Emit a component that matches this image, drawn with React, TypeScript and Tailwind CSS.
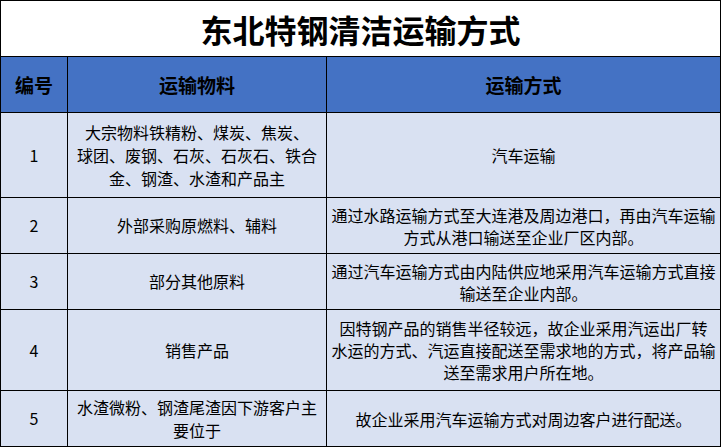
import React from "react";

interface Row {
  no: string;
  material: string[];
  method: string[];
  height: string;
}

const rows: Row[] = [
  {
    no: "1",
    material: ["大宗物料铁精粉、煤炭、焦炭、", "球团、废钢、石灰、石灰石、铁合", "金、钢渣、水渣和产品主"],
    method: ["汽车运输"],
    height: "h-[84px]",
  },
  {
    no: "2",
    material: ["外部采购原燃料、辅料"],
    method: ["通过水路运输方式至大连港及周边港口，再由汽车运输", "方式从港口输送至企业厂区内部。"],
    height: "h-[55px]",
  },
  {
    no: "3",
    material: ["部分其他原料"],
    method: ["通过汽车运输方式由内陆供应地采用汽车运输方式直接", "输送至企业内部。"],
    height: "h-[55px]",
  },
  {
    no: "4",
    material: ["销售产品"],
    method: [
      "因特钢产品的销售半径较远，故企业采用汽运出厂转",
      "水运的方式、汽运直接配送至需求地的方式，将产品输",
      "送至需求用户所在地。",
    ],
    height: "h-[80px]",
  },
  {
    no: "5",
    material: ["水渣微粉、钢渣尾渣因下游客户主", "要位于"],
    method: ["故企业采用汽车运输方式对周边客户进行配送。"],
    height: "h-[55px]",
  },
];

export default function App() {
  return (
    <div className="w-[721px] h-[447px] bg-white font-['Noto_Sans_CJK_SC',sans-serif] text-black">
      <div className="grid grid-cols-[66px_258px_393px] gap-px bg-black p-px">
        {/* Title */}
        <div className="col-span-3 flex h-[55px] items-center justify-center bg-white text-[32px] font-bold leading-none">
          东北特钢清洁运输方式
        </div>

        {/* Header */}
        <HeaderCell label="编号" />
        <HeaderCell label="运输物料" />
        <HeaderCell label="运输方式" />

        {rows.map((r) => (
          <React.Fragment key={r.no}>
            <BodyCell lines={[r.no]} height={r.height} />
            <BodyCell lines={r.material} height={r.height} />
            <BodyCell lines={r.method} height={r.height} tight />
          </React.Fragment>
        ))}
      </div>
    </div>
  );
}

function HeaderCell({ label }: { label: string }) {
  return (
    <div className="flex h-[55px] items-center justify-center bg-[#4472c4] text-[19px] font-bold leading-none">
      {label}
    </div>
  );
}

function BodyCell({ lines, height, tight }: { lines: string[]; height: string; tight?: boolean }) {
  return (
    <div
      className={`flex ${height} flex-col items-center justify-center bg-[#d9e1f2] text-[16px] whitespace-nowrap ${
        tight ? "leading-[22px]" : "leading-[23px]"
      }`}
    >
      {lines.map((l) => (
        <span key={l}>{l}</span>
      ))}
    </div>
  );
}
